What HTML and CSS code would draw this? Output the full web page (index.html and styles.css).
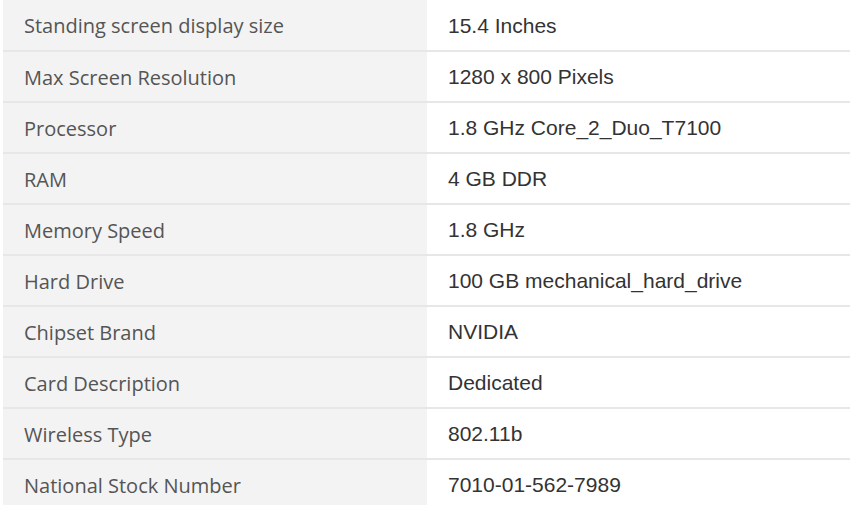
FILE: index.html
```html
<!DOCTYPE html>
<html lang="en">
<head>
    <meta charset="UTF-8">
    <meta name="viewport" content="width=device-width, initial-scale=1.0">
    <title>Technical Details</title>
    <link rel="stylesheet" href="styles.css">
</head>
<body>
    <!-- Product specifications -->
    <table class="specs">
        <tr><th>Standing screen display size</th><td>15.4 Inches</td></tr>
        <tr><th>Max Screen Resolution</th><td>1280 x 800 Pixels</td></tr>
        <tr><th>Processor</th><td>1.8 GHz Core_2_Duo_T7100</td></tr>
        <tr><th>RAM</th><td>4 GB DDR</td></tr>
        <tr><th>Memory Speed</th><td>1.8 GHz</td></tr>
        <tr><th>Hard Drive</th><td>100 GB mechanical_hard_drive</td></tr>
        <tr><th>Chipset Brand</th><td>NVIDIA</td></tr>
        <tr><th>Card Description</th><td>Dedicated</td></tr>
        <tr><th>Wireless Type</th><td>802.11b</td></tr>
        <tr><th>National Stock Number</th><td>7010-01-562-7989</td></tr>
    </table>
</body>
</html>
```

FILE: styles.css
```css
* {
    margin: 0;
    padding: 0;
    box-sizing: border-box;
}

body {
    background: #fff;
    padding: 0 0 0 3px;
}

.specs {
    width: 847px;
    border-collapse: collapse;
}

.specs tr {
    height: 51px;
    border-bottom: 2px solid #e7e7e7;
}

.specs th {
    width: 424px;
    background-color: #f3f3f3;
    text-align: left;
    font-family: 'Open Sans', sans-serif;
    font-weight: 400;
    font-size: 20px;
    color: #555;
    padding: 1px 21px 0;
}

.specs td {
    font-family: 'Liberation Sans', Arial, sans-serif;
    font-size: 21px;
    color: #333;
    padding: 1px 21px 0;
}
```
